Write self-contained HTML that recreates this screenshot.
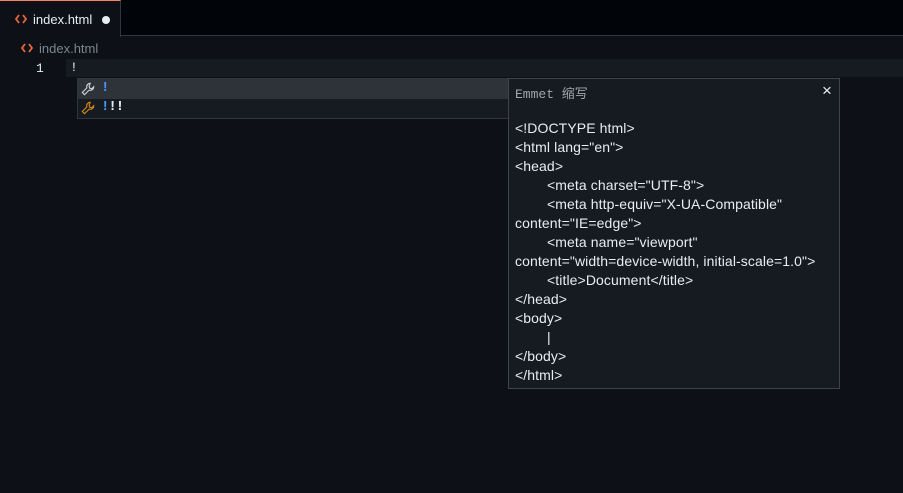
<!DOCTYPE html>
<html><head><style>
body{margin:0;width:903px;height:493px;background:#0d1117;overflow:hidden;font-family:"Liberation Sans",sans-serif;color:#e6edf3;position:relative}
.abs{position:absolute}
.tabbar{left:0;top:0;width:903px;height:36px;background:#010409;border-bottom:1px solid #30363d;box-sizing:border-box}
.tab{left:0;top:0;width:121px;height:37px;background:#0d1117;border-top:1px solid #f78166;border-right:1px solid #30363d;box-sizing:border-box}
.lh{left:66px;top:59px;width:837px;height:18px;background:#161b22}
.sug{left:77px;top:78px;width:432px;height:41px;background:#161b22;border:1px solid #30363d;box-sizing:border-box}
.sel{left:0;top:0;width:430px;height:20px;background:#2e3239}
.doc{left:508px;top:78px;width:332px;height:311px;background:#161b22;border:1px solid #3d444d;box-sizing:border-box}
.code{left:6px;top:40px;font-size:14px;letter-spacing:0.1px;line-height:19px;white-space:pre;color:#e6edf3}
.t{display:inline-block;width:32px}
</style></head><body>
<div class="abs tabbar"></div>
<div class="abs tab">
 <svg class="abs" style="left:15px;top:13px" width="12" height="10" viewBox="0 0 12 10"><path d="M4 1L1 5l3 4M8 1l3 4-3 4" fill="none" stroke="#e8673a" stroke-width="1.8"/></svg>
 <span class="abs" style="left:33px;top:11px;font-size:13px">index.html</span>
 <span class="abs" style="left:102px;top:15px;width:8px;height:8px;border-radius:50%;background:#e6edf3"></span>
</div>
<svg class="abs" style="left:21px;top:43px" width="12" height="10" viewBox="0 0 12 10"><path d="M4 1L1 5l3 4M8 1l3 4-3 4" fill="none" stroke="#e8673a" stroke-width="1.8"/></svg>
<span class="abs" style="left:39px;top:41px;font-size:13px;color:#7d8590">index.html</span>
<div class="abs lh"></div>
<span class="abs" style="left:36px;top:61px;font-size:13px;color:#e6edf3;font-family:'Liberation Mono',monospace">1</span>
<span class="abs" style="left:70px;top:60px;font-size:13px;font-family:'Liberation Mono',monospace">!</span>
<div class="abs sug">
 <div class="abs sel"></div>
 <svg class="abs" style="left:3px;top:3px" width="14" height="14" viewBox="0 0 16 16"><path d="M10.5 1.5a4 4 0 0 0-3.8 5.2L1.5 12l2.5 2.5 5.3-5.2a4 4 0 0 0 5.2-3.8l-2.2 2.2-2.4-.6-.6-2.4z" fill="none" stroke="#c9d1d9" stroke-width="1.3"/></svg>
 <span class="abs" style="left:23px;top:1px;font-size:14px;color:#4493f8;font-family:'Liberation Mono',monospace;font-weight:bold">!</span>
 <svg class="abs" style="left:3px;top:22px" width="14" height="14" viewBox="0 0 16 16"><path d="M10.5 1.5a4 4 0 0 0-3.8 5.2L1.5 12l2.5 2.5 5.3-5.2a4 4 0 0 0 5.2-3.8l-2.2 2.2-2.4-.6-.6-2.4z" fill="none" stroke="#d18616" stroke-width="1.3"/></svg>
 <span class="abs" style="left:23px;top:20px;font-size:14px;font-family:'Liberation Mono',monospace;font-weight:bold;letter-spacing:-1px"><span style="color:#4493f8">!</span>!!</span>
</div>
<div class="abs doc">
 <span class="abs" style="left:6px;top:4px;font-size:13px;color:#9da5ae;font-family:'Liberation Mono','Noto Sans CJK SC',monospace">Emmet 缩写</span>
 <span class="abs" style="left:313px;top:2px;font-size:17px;color:#e6edf3">×</span>
 <div class="abs code">&lt;!DOCTYPE html&gt;
&lt;html lang="en"&gt;
&lt;head&gt;
<span class="t"></span>&lt;meta charset="UTF-8"&gt;
<span class="t"></span>&lt;meta http-equiv="X-UA-Compatible"
content="IE=edge"&gt;
<span class="t"></span>&lt;meta name="viewport"
content="width=device-width, initial-scale=1.0"&gt;
<span class="t"></span>&lt;title&gt;Document&lt;/title&gt;
&lt;/head&gt;
&lt;body&gt;
<span class="t"></span>|
&lt;/body&gt;
&lt;/html&gt;</div>
</div>
</body></html>
